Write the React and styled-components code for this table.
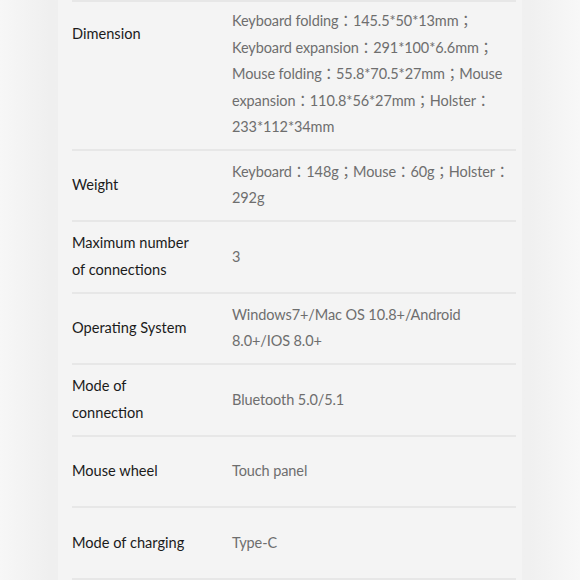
import React from "react";
import styled, { createGlobalStyle } from "styled-components";

const Global = createGlobalStyle`
  html, body { margin: 0; padding: 0; }
  body {
    background: #f3f3f3;
    font-family: Lato, "Noto Sans CJK TC", sans-serif;
  }
`;

const Page = styled.div`
  width: 580px;
  height: 580px;
  overflow: hidden;
  background: linear-gradient(90deg, #f7f7f7 0px, #efefef 50px, #f0f0f0 530px, #f8f8f8 580px);
`;

const Panel = styled.div`
  margin-left: 58px;
  width: 464px;
  min-height: 580px;
  background: #f4f4f4;
  padding: 0 6px 0 14px;
  box-sizing: border-box;
`;

const Table = styled.div`
  border-top: 2px solid #e7e7e7;
`;

const Row = styled.div`
  display: grid;
  grid-template-columns: 160px 1fr;
  align-items: ${(p) => (p.$top ? "start" : "center")};
  padding: ${(p) => (p.$top ? "6px" : "8px")} 0 8px;
  min-height: 53.5px;
  border-bottom: 2px solid #e7e7e7;
`;

const Label = styled.div`
  display: flex;
  align-items: center;
  min-height: 53px;
  max-width: 124px;
  font-size: 14.6px;
  line-height: 26.5px;
  color: #1b1b1b;
`;

const Value = styled.div`
  font-size: 14.5px;
  letter-spacing: -0.1px;
  line-height: 26.5px;
  color: #6e6e6e;
`;

const rows = [
  {
    label: "Dimension",
    value:
      "Keyboard folding：145.5*50*13mm；Keyboard expansion：291*100*6.6mm；Mouse folding：55.8*70.5*27mm；Mouse expansion：110.8*56*27mm；Holster：233*112*34mm",
    top: true,
  },
  { label: "Weight", value: "Keyboard：148g；Mouse：60g；Holster：292g" },
  { label: "Maximum number of connections", value: "3" },
  { label: "Operating System", value: "Windows7+/Mac OS 10.8+/Android 8.0+/IOS 8.0+" },
  { label: "Mode of connection", value: "Bluetooth 5.0/5.1" },
  { label: "Mouse wheel", value: "Touch panel" },
  { label: "Mode of charging", value: "Type-C" },
];

export default function App() {
  return (
    <>
      <Global />
      <Page>
        <Panel>
          <Table>
            {rows.map((r) => (
              <Row key={r.label} $top={r.top}>
                <Label>{r.label}</Label>
                <Value>{r.value}</Value>
              </Row>
            ))}
          </Table>
        </Panel>
      </Page>
    </>
  );
}
